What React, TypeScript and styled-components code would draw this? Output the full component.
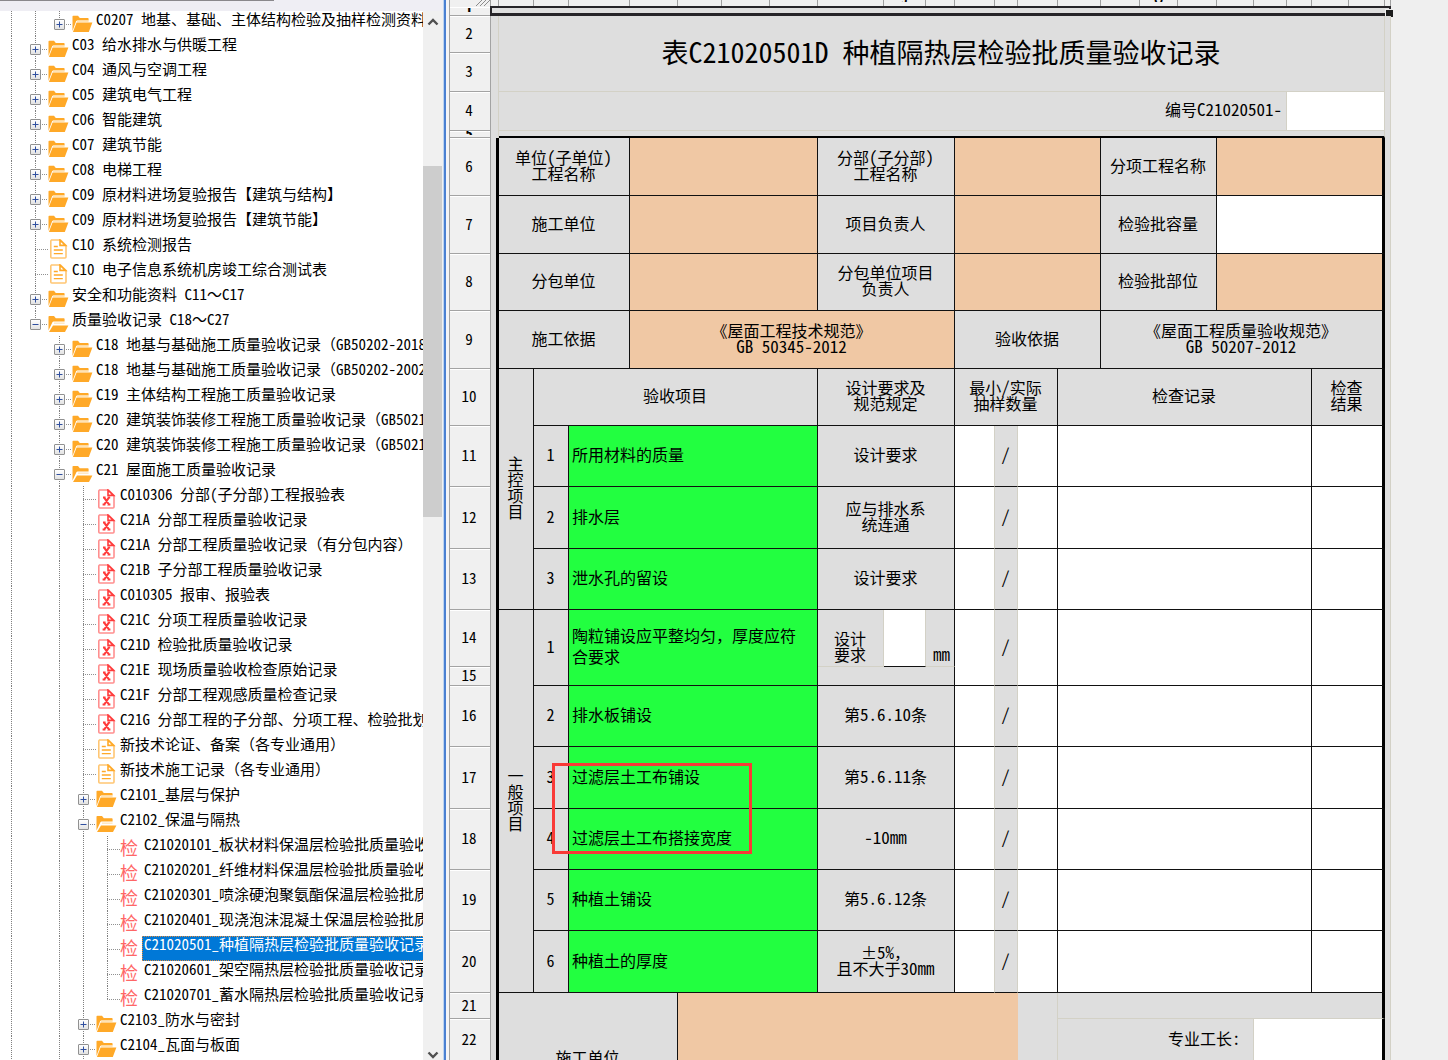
import React from "react";
import styled, { createGlobalStyle, css } from "styled-components";

const cjk = `"Noto Sans CJK SC", "Liberation Sans", sans-serif`;
const ink = "#111111";
const faint = "#d3d1c6";
const grey = "#dedede";
const tan = "#f0c8a4";
const green = "#22ff40";

const GlobalStyle = createGlobalStyle`
  * { box-sizing: border-box; }
  body {
    margin: 0;
    background: #efefef;
    color: #000;
    font-family: ${cjk};
    text-spacing-trim: space-all;
    overflow: hidden;
  }
  button, input { font: inherit; color: inherit; }
`;

/* Codes and numbers use the half-width forms of the face. */
const Latin = styled.span<{ $size: number }>`
  font-size: ${(p) => p.$size}px;
  font-feature-settings: "hwid";
`;

const Text = ({ children, size = 17 }: { children: string; size?: number }) => (
  <>
    {children.split("\n").map((part, i) => (
      <React.Fragment key={i}>
        {i > 0 && <br />}
        {part.split(/([\x20-\x7e\u00a0]+)/).map((s, j) => (j % 2 ? <Latin key={j} $size={size}>{s}</Latin> : s))}
      </React.Fragment>
    ))}
  </>
);

/* ---------- shell ---------- */

const Shell = styled.div`
  display: flex;
  height: 100vh;
  overflow: hidden;
`;

const Sidebar = styled.aside`
  display: flex;
  flex-direction: column;
  flex: none;
  width: 443px;
  background: #fff;
`;

const Caption = styled.div`
  flex: none;
  height: 11px;
  background: #efeef4;
`;

const CaptionRule = styled.div`
  width: 274px;
  height: 1px;
  background: #8a888c;
`;

const SidebarBody = styled.div`
  display: flex;
  flex: 1;
  min-height: 0;
`;

const Splitter = styled.div`
  flex: none;
  width: 6px;
  border-left: 1px solid #bcd3f0;
  background: linear-gradient(to right, #4a80d2 2px, #f4f4f6 2px);
`;

/* ---------- scroll bar ---------- */

const ScrollTrack = styled.div`
  display: flex;
  flex-direction: column;
  flex: none;
  width: 20px;
  padding-right: 1px;
  background: #f0f0f0;
`;

const ScrollArrow = styled.button<{ $h: number }>`
  display: flex;
  align-items: center;
  justify-content: center;
  flex: none;
  height: ${(p) => p.$h}px;
  padding: 0;
  border: 0;
  background: none;
`;

const ScrollSpace = styled.div<{ $grow: number }>`
  flex: ${(p) => p.$grow} 1 0;
`;

const ScrollThumb = styled.div`
  flex: 351 1 0;
  background: #cdcdcd;
`;

const Chevron = ({ down }: { down?: boolean }) => (
  <svg width="12" height="10" viewBox="0 0 12 10" fill="none" stroke="#505050" strokeWidth="2.4">
    <path d={down ? "M1.5 2.5 6 7 10.5 2.5" : "M1.5 7.5 6 3 10.5 7.5"} />
  </svg>
);

/* ---------- tree ---------- */

const Tree = styled.ul`
  flex: 1;
  min-width: 0;
  margin: 0;
  padding: 0;
  overflow: hidden;
  list-style: none;
`;

const Node = styled.li`
  display: flex;
  height: 25px;
`;

type GuideKind = "none" | "full" | "half";

const Guide = styled.span<{ $kind: GuideKind }>`
  display: flex;
  align-items: center;
  flex: none;
  width: 24px;
  height: 25px;
  padding-top: 1px;
  ${(p) =>
    p.$kind !== "none" &&
    css`
      background: repeating-linear-gradient(to bottom, #808080 0 1px, transparent 1px 2px) 11px 0 / 1px
        ${p.$kind === "half" ? "13px" : "100%"} no-repeat;
    `}
`;

const Dash = styled.span`
  flex: 1;
  height: 1px;
  margin-left: 11px;
  background: repeating-linear-gradient(to right, #909090 0 1px, transparent 1px 2px);
`;

const ShortDash = styled(Dash)`
  margin-left: 1px;
`;

const Toggle = styled.button`
  display: flex;
  align-items: center;
  justify-content: center;
  width: 11px;
  height: 11px;
  margin-left: 6px;
  padding: 0;
  border: 1px solid #919191;
  border-radius: 1px;
  background: linear-gradient(#fff, #e2e2e2);
`;

const IconSlot = styled.span`
  display: flex;
  align-items: center;
  flex: none;
  width: 22px;
  height: 25px;
`;

const CheckMark = styled.span`
  padding-bottom: 3px;
  color: #ff6666;
  font-size: 18px;
  line-height: 22px;
`;

const NodeLabel = styled.button<{ $selected?: boolean }>`
  flex: ${(p) => (p.$selected ? "1 0 auto" : "none")};
  display: block;
  height: 25px;
  padding: 0 0 9px 2px;
  border: 0;
  background: none;
  font-size: 15px;
  line-height: 14px;
  text-align: left;
  white-space: pre;
  ${(p) =>
    p.$selected &&
    css`
      color: #fff;
      background: #0078d7;
      outline: 1px dotted #e08a3c;
      outline-offset: -1px;
    `}
`;

const Folder = ({ open }: { open?: boolean }) =>
  open ? (
    <svg width="21" height="18" viewBox="0 0 21 18">
      <path d="M0.5 15.5V1.8Q0.5 1 1.3 1H6l1.8 2.2h8q0.8 0 0.8 0.8V6.4H5.6q-0.8 0-1.2 0.8z" fill="#ffa928" />
      <path d="M6 8.2h10.6" stroke="#ffe9c6" strokeWidth="1.6" />
      <path d="M5 10.4H20.4L17 17H1z" fill="#ffa928" />
    </svg>
  ) : (
    <svg width="21" height="18" viewBox="0 0 21 18">
      <path d="M0.5 16V1.5Q0.5 0.8 1.3 0.8H6L7.8 3h8q0.8 0 0.8 0.8V5.4H5.4q-0.9 0-1.3 0.8z" fill="#ffa928" />
      <path d="M5 6.3h11.6" stroke="#ffe3b5" strokeWidth="1.6" />
      <path d="M4.6 7.6H20.4L16.8 17H0.9z" fill="#ffa928" />
    </svg>
  );

const Sheet = ({ red }: { red?: boolean }) => {
  const main = red ? "#ff3b3b" : "#ffa928";
  const soft = red ? "#ff8f8f" : "#ffc673";
  return (
    <svg width="20" height="20" viewBox="0 0 20 20" fill="none">
      <path d="M3 1h9.5L18 6.5V18q0 1-1 1H3.8q-1 0-1-1V2q0-1 1-1z" stroke={soft} strokeWidth="1.6" />
      <path d="M12 1.2V6.4H17.6z" stroke={main} strokeWidth="1.6" />
      {red ? (
        <path d="M7 8.6h2.6M11.6 8.6h2.6M6.6 15.6h2.8M11.4 15.6h3M8.2 8.6l4.8 7M12.8 8.6l-4.6 7" stroke={main} strokeWidth="2" />
      ) : (
        <path d="M5.8 7.5h4M5.8 11h9M5.8 14.6h9" stroke={main} strokeWidth="1.4" />
      )}
    </svg>
  );
};

type IconKind = "folder" | "open" | "doc" | "red" | "check";
type Item = { guides: string; icon: IconKind; text: string; selected?: boolean };

/* One letter per level: f = line goes on, h = line ends here, n = no line. */
const items: Item[] = [
  { guides: "ffh", icon: "folder", text: "C0207 地基、基础、主体结构检验及抽样检测资料" },
  { guides: "ff", icon: "folder", text: "C03 给水排水与供暖工程" },
  { guides: "ff", icon: "folder", text: "C04 通风与空调工程" },
  { guides: "ff", icon: "folder", text: "C05 建筑电气工程" },
  { guides: "ff", icon: "folder", text: "C06 智能建筑" },
  { guides: "ff", icon: "folder", text: "C07 建筑节能" },
  { guides: "ff", icon: "folder", text: "C08 电梯工程" },
  { guides: "ff", icon: "folder", text: "C09 原材料进场复验报告【建筑与结构】" },
  { guides: "ff", icon: "folder", text: "C09 原材料进场复验报告【建筑节能】" },
  { guides: "ff", icon: "doc", text: "C10 系统检测报告" },
  { guides: "ff", icon: "doc", text: "C10 电子信息系统机房竣工综合测试表" },
  { guides: "ff", icon: "folder", text: "安全和功能资料 C11～C17" },
  { guides: "fh", icon: "open", text: "质量验收记录 C18～C27" },
  { guides: "fnf", icon: "folder", text: "C18 地基与基础施工质量验收记录（GB50202-2018）" },
  { guides: "fnf", icon: "folder", text: "C18 地基与基础施工质量验收记录（GB50202-2002）" },
  { guides: "fnf", icon: "folder", text: "C19 主体结构工程施工质量验收记录" },
  { guides: "fnf", icon: "folder", text: "C20 建筑装饰装修工程施工质量验收记录（GB50210）" },
  { guides: "fnf", icon: "folder", text: "C20 建筑装饰装修工程施工质量验收记录（GB50210）" },
  { guides: "fnf", icon: "open", text: "C21 屋面施工质量验收记录" },
  { guides: "fnff", icon: "red", text: "C010306 分部(子分部)工程报验表" },
  { guides: "fnff", icon: "red", text: "C21A 分部工程质量验收记录" },
  { guides: "fnff", icon: "red", text: "C21A 分部工程质量验收记录（有分包内容）" },
  { guides: "fnff", icon: "red", text: "C21B 子分部工程质量验收记录" },
  { guides: "fnff", icon: "red", text: "C010305 报审、报验表" },
  { guides: "fnff", icon: "red", text: "C21C 分项工程质量验收记录" },
  { guides: "fnff", icon: "red", text: "C21D 检验批质量验收记录" },
  { guides: "fnff", icon: "red", text: "C21E 现场质量验收检查原始记录" },
  { guides: "fnff", icon: "red", text: "C21F 分部工程观感质量检查记录" },
  { guides: "fnff", icon: "red", text: "C21G 分部工程的子分部、分项工程、检验批划" },
  { guides: "fnff", icon: "doc", text: "新技术论证、备案（各专业通用）" },
  { guides: "fnff", icon: "doc", text: "新技术施工记录（各专业通用）" },
  { guides: "fnff", icon: "folder", text: "C2101_基层与保护" },
  { guides: "fnff", icon: "open", text: "C2102_保温与隔热" },
  { guides: "fnfff", icon: "check", text: "C21020101_板状材料保温层检验批质量验收" },
  { guides: "fnfff", icon: "check", text: "C21020201_纤维材料保温层检验批质量验收" },
  { guides: "fnfff", icon: "check", text: "C21020301_喷涂硬泡聚氨酯保温层检验批质" },
  { guides: "fnfff", icon: "check", text: "C21020401_现浇泡沫混凝土保温层检验批质" },
  { guides: "fnfff", icon: "check", text: "C21020501_种植隔热层检验批质量验收记录", selected: true },
  { guides: "fnfff", icon: "check", text: "C21020601_架空隔热层检验批质量验收记录" },
  { guides: "fnffh", icon: "check", text: "C21020701_蓄水隔热层检验批质量验收记录" },
  { guides: "fnff", icon: "folder", text: "C2103_防水与密封" },
  { guides: "fnff", icon: "folder", text: "C2104_瓦面与板面" },
];

const kinds: Record<string, GuideKind> = { f: "full", h: "half", n: "none" };

const TreeNode = ({ item }: { item: Item }) => {
  const last = item.guides.length - 1;
  const branch = item.icon === "folder" || item.icon === "open";
  return (
    <Node>
      {item.guides.split("").map((g, i) => (
        <Guide key={i} $kind={kinds[g]}>
          {i === last && branch && (
            <>
              <Toggle aria-label={item.icon === "open" ? "折叠" : "展开"}>
                <svg width="7" height="7" viewBox="0 0 7 7" stroke="#2f4f9f" strokeWidth="1">
                  <path d={item.icon === "open" ? "M0.5 3.5h6" : "M0.5 3.5h6M3.5 0.5v6"} />
                </svg>
              </Toggle>
              <ShortDash />
            </>
          )}
          {i === last && !branch && <Dash />}
        </Guide>
      ))}
      <IconSlot>
        {branch && <Folder open={item.icon === "open"} />}
        {item.icon === "doc" && <Sheet />}
        {item.icon === "red" && <Sheet red />}
        {item.icon === "check" && <CheckMark>检</CheckMark>}
      </IconSlot>
      <NodeLabel $selected={item.selected}>
        <Text size={15}>{item.text}</Text>
      </NodeLabel>
    </Node>
  );
};

/* ---------- spreadsheet ---------- */

const Workspace = styled.main`
  flex: 1;
  min-width: 0;
  overflow: hidden;
`;

const Grid = styled.table`
  table-layout: fixed;
  width: 942px;
  border-collapse: separate;
  border-spacing: 0;
  font-size: 16px;
  line-height: 16px;
`;

const Row = styled.tr<{ $h: number }>`
  height: ${(p) => p.$h}px;
`;

const ColHead = styled.th`
  padding: 0;
  border-right: 1px solid #a0a0a0;
  background: #f0f0f0;
  font-size: 12px;
  line-height: 6px;
  vertical-align: top;
`;

const ColLetter = styled.div`
  display: flex;
  align-items: flex-end;
  justify-content: center;
  height: 2px;
  overflow: hidden;
`;

const Corner = styled(ColHead)`
  border-left: 1px solid #a0a0a0;
`;

const CornerMark = styled.svg`
  display: block;
  margin-left: auto;
`;

const RowHead = styled.th`
  padding: 0 2px 2px 0;
  border: solid #a3a3a3;
  border-width: 0 1px 1px 1px;
  background: #f0f0f0;
  box-shadow: inset 0 1px #fff;
  font-size: 15px;
  font-weight: 400;
  font-feature-settings: "hwid";
  text-align: center;
`;

const Sliver = styled.div`
  height: 4px;
  overflow: hidden;
  line-height: 4px;
  font-weight: 700;
`;

type CellProps = {
  $bg?: string;
  $right?: string;
  $bottom?: string;
  $align?: "left" | "center" | "right";
  $valign?: "middle" | "bottom";
  $flat?: boolean;
};

const Cell = styled.td<CellProps>`
  position: relative;
  padding: ${(p) => (p.$flat ? "0" : p.$align === "left" ? "0 12px 4px 3px" : "0 4px 4px 3px")};
  background: ${(p) => p.$bg ?? grey};
  border-right: ${(p) => p.$right ?? `1px solid ${ink}`};
  border-bottom: ${(p) => p.$bottom ?? `1px solid ${ink}`};
  text-align: ${(p) => p.$align ?? "center"};
  vertical-align: ${(p) => p.$valign ?? "middle"};
`;

const Paragraph = styled.div`
  line-height: 21px;
`;

const Title = styled.div`
  font-size: 27px;
  line-height: 32px;
`;

const Upright = styled.div`
  width: 16px;
  margin: 0 auto;
  word-break: break-all;
`;

const Field = styled.input`
  display: block;
  width: 100%;
  height: 24px;
  padding: 0;
  border: 0;
  outline: 0;
  background: transparent;
`;

const Selection = styled.div`
  position: absolute;
  inset: -1px 0 0 -1px;
  border: solid #262428;
  border-width: 2px 2px 3px 2px;

  &::after {
    content: "";
    position: absolute;
    right: -5px;
    bottom: -5px;
    width: 7px;
    height: 7px;
    border: 1px solid #efefef;
    background: #1c1c1c;
  }
`;

const RedFrame = styled.div`
  position: absolute;
  top: 16px;
  left: -17px;
  z-index: 1;
  width: 200px;
  height: 91px;
  border: 3px solid #f93a37;
`;

/* Right edges of the columns, measured from the left of the row headers. */
const edges = [42, 50, 85, 120, 181, 229, 273, 321, 369, 435, 477, 506, 546, 569, 609, 652, 691, 729, 768, 805, 838, 863, 900, 936, 942];
const line = (c: string, w = 1) => `${w}px solid ${c}`;
const frame = line("#000", 3);
const soft = line(faint);

const Entry = ({ name, ...rest }: CellProps & { name: string; colSpan?: number; rowSpan?: number }) => (
  <Cell $bg="#fff" {...rest}>
    <Field aria-label={name} />
  </Cell>
);

const CheckColumns = ({ name, rowSpan = 1 }: { name: string; rowSpan?: number }) => (
  <>
    <Entry name={`${name} 最小抽样数量`} rowSpan={rowSpan} $right={soft} />
    <Cell rowSpan={rowSpan} $right={soft}><Text>/</Text></Cell>
    <Entry name={`${name} 实际抽样数量`} rowSpan={rowSpan} />
    <Entry name={`${name} 检查记录`} colSpan={7} rowSpan={rowSpan} />
    <Entry name={`${name} 检查结果`} colSpan={2} rowSpan={rowSpan} $right={frame} />
  </>
);

const infoRows = [
  { n: 6, h: 58, a: "单位(子单位)\n工程名称", b: "分部(子分部)\n工程名称", c: "分项工程名称", last: tan },
  { n: 7, h: 58, a: "施工单位", b: "项目负责人", c: "检验批容量", last: "#fff" },
  { n: 8, h: 57, a: "分包单位", b: "分包单位项目\n负责人", c: "检验批部位", last: tan },
];

type Check = { n: number; h: number; no: number; name: string; rule: string; framed?: boolean };

const mainChecks: Check[] = [
  { n: 11, h: 61, no: 1, name: "所用材料的质量", rule: "设计要求" },
  { n: 12, h: 62, no: 2, name: "排水层", rule: "应与排水系\n统连通" },
  { n: 13, h: 61, no: 3, name: "泄水孔的留设", rule: "设计要求" },
];

const generalChecks: Check[] = [
  { n: 16, h: 61, no: 2, name: "排水板铺设", rule: "第5.6.10条" },
  { n: 17, h: 62, no: 3, name: "过滤层土工布铺设", rule: "第5.6.11条", framed: true },
  { n: 18, h: 61, no: 4, name: "过滤层土工布搭接宽度", rule: "-10mm" },
  { n: 19, h: 61, no: 5, name: "种植土铺设", rule: "第5.6.12条" },
  { n: 20, h: 62, no: 6, name: "种植土的厚度", rule: "±5%，\n且不大于30mm" },
];

const CheckRow = ({ row }: { row: Check }) => (
  <Row $h={row.h}>
    <RowHead scope="row">{row.n}</RowHead>
    <Cell><Text size={16}>{String(row.no)}</Text></Cell>
    <Cell colSpan={5} $bg={green} $align="left">
      {row.name}
      {row.framed && <RedFrame />}
    </Cell>
    <Cell colSpan={3}><Text>{row.rule}</Text></Cell>
    <CheckColumns name={row.name} />
  </Row>
);

const letters = " ABCDEFGHIJKLMNOPQRSTUVWX";

export default function App() {
  return (
    <>
      <GlobalStyle />
      <Shell>
        <Sidebar>
          <Caption><CaptionRule /></Caption>
          <SidebarBody>
            <Tree>
              {items.map((item, i) => <TreeNode key={i} item={item} />)}
            </Tree>
            <ScrollTrack>
              <ScrollArrow $h={22} aria-label="向上滚动"><Chevron /></ScrollArrow>
              <ScrollSpace $grow={133} />
              <ScrollThumb />
              <ScrollSpace $grow={533} />
              <ScrollArrow $h={10} aria-label="向下滚动"><Chevron down /></ScrollArrow>
            </ScrollTrack>
          </SidebarBody>
        </Sidebar>
        <Splitter />
        <Workspace>
          <Grid>
            <colgroup>
              {edges.map((e, i) => <col key={e} width={i ? e - edges[i - 1] : e} />)}
            </colgroup>
            <tbody>
              <Row $h={7}>
                <Corner>
                  <CornerMark width="14" height="7" viewBox="0 0 14 7" stroke="#8c8c8c">
                    <path d="M0 6 6 0M4 6 10 0M8 6 14 0" />
                  </CornerMark>
                </Corner>
                {edges.slice(1).map((e, i) => (
                  <ColHead key={e}>
                    {"JQ".includes(letters[i + 1]) && <ColLetter>{letters[i + 1]}</ColLetter>}
                  </ColHead>
                ))}
              </Row>
              <Row $h={9}>
                <RowHead scope="row"><Sliver>1</Sliver></RowHead>
                <Cell colSpan={24} $flat $right="0" $bottom="0"><Selection /></Cell>
              </Row>
              <Row $h={37}>
                <RowHead scope="row">2</RowHead>
                <Cell rowSpan={4} $flat $right={soft} $bottom="0" />
                <Cell colSpan={22} rowSpan={2} $right={soft} $bottom={soft}>
                  <Title><Text size={28}>表C21020501D 种植隔热层检验批质量验收记录</Text></Title>
                </Cell>
                <Cell rowSpan={22} $flat $right={soft} $bottom="0" />
              </Row>
              <Row $h={39}>
                <RowHead scope="row">3</RowHead>
              </Row>
              <Row $h={39}>
                <RowHead scope="row">4</RowHead>
                <Cell colSpan={19} $align="right" $right={soft} $bottom={soft}><Text>编号C21020501-</Text></Cell>
                <Entry name="编号" colSpan={3} $right={soft} $bottom={soft} />
              </Row>
              <Row $h={7}>
                <RowHead scope="row"><Sliver>5</Sliver></RowHead>
                <Cell colSpan={22} $flat $right={soft} $bottom={line("#000", 2)} />
              </Row>

              {infoRows.map((r, i) => (
                <Row key={r.n} $h={r.h}>
                  <RowHead scope="row">{r.n}</RowHead>
                  {i === 0 && <Cell rowSpan={18} $flat $right={frame} $bottom="0" />}
                  <Cell colSpan={3}><Text>{r.a}</Text></Cell>
                  <Entry name={r.a} colSpan={4} $bg={tan} />
                  <Cell colSpan={3}><Text>{r.b}</Text></Cell>
                  <Entry name={r.b} colSpan={4} $bg={tan} />
                  <Cell colSpan={3}>{r.c}</Cell>
                  <Entry name={r.c} colSpan={5} $bg={r.last} $right={frame} />
                </Row>
              ))}

              <Row $h={58}>
                <RowHead scope="row">9</RowHead>
                <Cell colSpan={3}>施工依据</Cell>
                <Cell colSpan={7} $bg={tan}><Text>{"《屋面工程技术规范》\nGB 50345-2012"}</Text></Cell>
                <Cell colSpan={4}>验收依据</Cell>
                <Cell colSpan={8} $right={frame}><Text>{"《屋面工程质量验收规范》\nGB 50207-2012"}</Text></Cell>
              </Row>

              <Row $h={57}>
                <RowHead scope="row">10</RowHead>
                <Cell rowSpan={4}><Upright>主控项目</Upright></Cell>
                <Cell colSpan={6}>验收项目</Cell>
                <Cell colSpan={3}><Text>{"设计要求及\n规范规定"}</Text></Cell>
                <Cell colSpan={3}><Text>{"最小/实际\n抽样数量"}</Text></Cell>
                <Cell colSpan={7}>检查记录</Cell>
                <Cell colSpan={2} $right={frame}><Text>{"检查\n结果"}</Text></Cell>
              </Row>
              {mainChecks.map((r) => <CheckRow key={r.n} row={r} />)}

              <Row $h={57}>
                <RowHead scope="row">14</RowHead>
                <Cell rowSpan={7}><Upright>一般项目</Upright></Cell>
                <Cell rowSpan={2}><Text size={16}>1</Text></Cell>
                <Cell colSpan={5} rowSpan={2} $bg={green} $align="left">
                  <Paragraph>陶粒铺设应平整均匀，厚度应符合要求</Paragraph>
                </Cell>
                <Cell $valign="bottom" $right={soft} $bottom={soft}><Text>{"设计\n要求"}</Text></Cell>
                <Entry name="设计要求厚度" $right={soft} />
                <Cell $valign="bottom" $align="right" $bottom={soft}><Text>mm</Text></Cell>
                <CheckColumns name="陶粒铺设" rowSpan={2} />
              </Row>
              <Row $h={19}>
                <RowHead scope="row">15</RowHead>
                <Cell colSpan={3} />
              </Row>
              {generalChecks.map((r) => <CheckRow key={r.n} row={r} />)}

              <Row $h={26}>
                <RowHead scope="row">21</RowHead>
                <Cell colSpan={4} rowSpan={3}>施工单位</Cell>
                <Entry name="施工单位意见" colSpan={8} rowSpan={3} $bg={tan} $right="0" />
                <Cell rowSpan={3} $right={soft} />
                <Cell colSpan={9} $right={frame} $bottom={soft} />
              </Row>
              <Row $h={43}>
                <RowHead scope="row">22</RowHead>
                <Cell colSpan={5} $align="right" $right={soft} $bottom={soft}><Text>{"专业工长:\u00a0"}</Text></Cell>
                <Entry name="专业工长" colSpan={4} $right={frame} $bottom={soft} />
              </Row>
              <Row $h={63}>
                <RowHead scope="row">23</RowHead>
                <Cell colSpan={9} $right={frame} />
              </Row>
            </tbody>
          </Grid>
        </Workspace>
      </Shell>
    </>
  );
}
